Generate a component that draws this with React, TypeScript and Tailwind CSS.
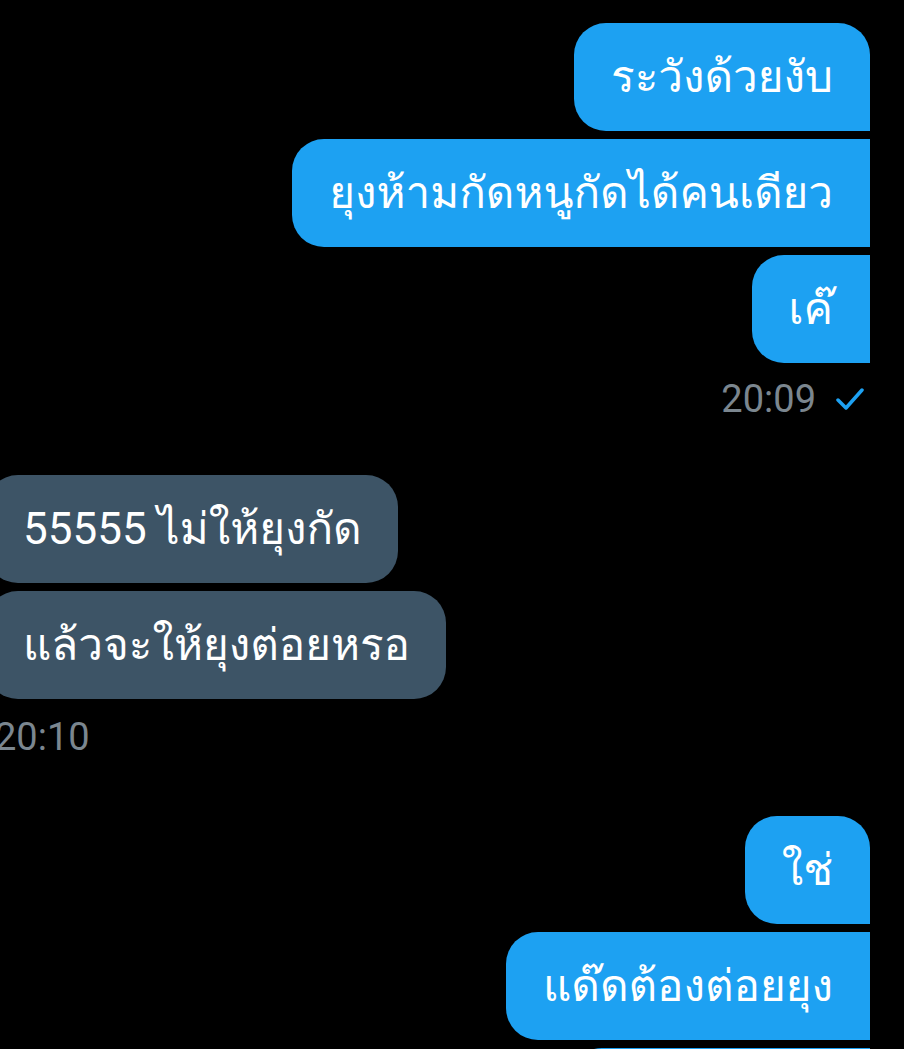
const sent1 = ["ระวังด้วยงับ", "ยุงห้ามกัดหนูกัดได้คนเดียว", "เค๊"];
const recv = ["55555 ไม่ให้ยุงกัด", "แล้วจะให้ยุงต่อยหรอ"];
const sent2 = ["ใช่", "แด๊ดต้องต่อยยุง", "ระวังด้วยนะ"];

const SentBubble = ({ text, first }: { text: string; first: boolean }) => (
  <div
    className={
      first
        ? "h-[108px] flex items-center px-[37px] bg-[#1da1f2] text-white text-[44px] rounded-l-[32px] rounded-tr-[32px]"
        : "h-[108px] flex items-center px-[37px] bg-[#1da1f2] text-white text-[44px] rounded-l-[32px]"
    }
  >
    {text}
  </div>
);

const RecvBubble = ({ text }: { text: string }) => (
  <div className="h-[108px] flex items-center pl-[37px] pr-[36px] bg-[#3d5466] text-white text-[44px] rounded-[32px] -ml-[14px]">
    {text}
  </div>
);

const App = () => {
  return (
    <div className="w-[904px] h-[1049px] bg-black overflow-hidden font-[family-name:Roboto,Loma,'Noto_Sans_Thai_Looped',sans-serif]">
      <div className="flex flex-col items-end gap-2 pt-[23px] pr-[34px]">
        {sent1.map((t, i) => (
          <SentBubble key={t} text={t} first={i === 0} />
        ))}
        <div className="flex items-center gap-[20px] mt-[7px] mr-[6px] text-[38px] leading-[42px] text-[#7b868f]">
          <span>20:09</span>
          <svg width="28" height="24" viewBox="0 0 28 24" fill="none">
            <path d="M2 13 L10 21 L26 3" stroke="#1da1f2" strokeWidth="3.5" strokeLinecap="round" strokeLinejoin="round" />
          </svg>
        </div>
      </div>

      <div className="flex flex-col items-start gap-2 mt-[55px]">
        {recv.map((t) => (
          <RecvBubble key={t} text={t} />
        ))}
        <div className="-ml-[5px] mt-[9px] text-[38px] leading-[42px] text-[#7b868f]">20:10</div>
      </div>

      <div className="flex flex-col items-end gap-2 mt-[58px] pr-[34px]">
        {sent2.map((t, i) => (
          <SentBubble key={t} text={t} first={i === 0} />
        ))}
      </div>
    </div>
  );
};

export default App;
